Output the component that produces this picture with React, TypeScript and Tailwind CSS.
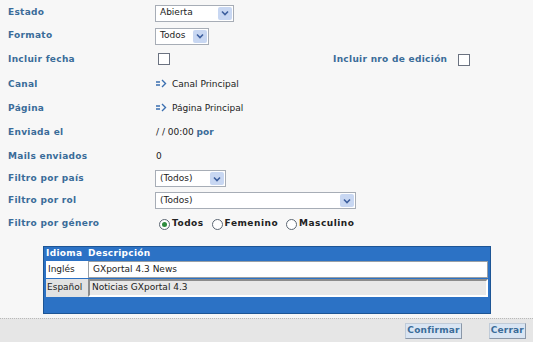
import React from "react"

const font = { fontFamily: '"DejaVu Sans", Verdana, sans-serif' }

function Select({ value, width }: { value: string; width: string }) {
  return (
    <div className={`flex h-[17px] items-center border border-[#a7adb6] bg-white pl-[4px] pr-[1px] ${width}`}>
      <span className="flex-1 text-[9px] text-[#222]">{value}</span>
      <span className="flex h-[13px] w-[14px] items-center justify-center rounded-[2px] bg-[#c8d7f2]">
        <svg width="8" height="6" viewBox="0 0 8 6">
          <path d="M1 1.5 L4 4.5 L7 1.5" stroke="#3d5f9e" strokeWidth="1.6" fill="none" />
        </svg>
      </span>
    </div>
  )
}

function Check() {
  return <span className="inline-block h-[12px] w-[12px] border border-[#6b7280] bg-white" />
}

function Arrow() {
  return (
    <svg width="12" height="9" viewBox="0 0 12 9" className="mr-[4px] -mt-[3px]">
      <path d="M0 3 H4 M0 6 H4" stroke="#3b6fb0" strokeWidth="1.3" />
      <path d="M6 1 L9.5 4.5 L6 8" stroke="#3b6fb0" strokeWidth="1.4" fill="none" />
    </svg>
  )
}

function Radio({ checked }: { checked?: boolean }) {
  return (
    <span className="mr-[2px] inline-flex h-[11px] w-[11px] items-center justify-center rounded-full border border-[#5c6773] bg-white">
      {checked && <span className="h-[5px] w-[5px] rounded-full bg-[#2e8b3e]" />}
    </span>
  )
}

const Label = ({ children }: { children: React.ReactNode }) => (
  <div className="w-[155px] shrink-0 pl-[8px] text-[9px] font-bold tracking-[0.3px] text-[#3a6c99]">{children}</div>
)

export default function App() {
  return (
    <div style={font} className="flex h-[342px] w-[533px] flex-col overflow-hidden bg-[#f7f7f7]">
      <div className="flex flex-col pt-[2px]">
        <div className="flex h-[22px] items-center">
          <Label>Estado</Label>
          <Select value="Abierta" width="w-[79px]" />
        </div>
        <div className="flex h-[24px] items-center">
          <Label>Formato</Label>
          <Select value="Todos" width="w-[54px]" />
        </div>
        <div className="flex h-[24px] items-center">
          <Label>Incluir fecha</Label>
          <div className="w-[178px] pl-[3px]">
            <Check />
          </div>
          <div className="w-[125px] text-[9px] font-bold tracking-[0.3px] text-[#3a6c99]">Incluir nro de edición</div>
          <Check />
        </div>
        <div className="flex h-[25px] items-center">
          <Label>Canal</Label>
          <div className="flex items-center pl-[1px] text-[9px] text-[#222]">
            <Arrow />
            Canal Principal
          </div>
        </div>
        <div className="flex h-[24px] items-center">
          <Label>Página</Label>
          <div className="flex items-center pl-[1px] text-[9px] text-[#222]">
            <Arrow />
            Página Principal
          </div>
        </div>
        <div className="flex h-[24px] items-center">
          <Label>Enviada el</Label>
          <div className="pl-[1px] text-[9px] text-[#222]">
            / / 00:00 <span className="font-bold text-[#3a6c99]">por</span>
          </div>
        </div>
        <div className="flex h-[23px] items-center">
          <Label>Mails enviados</Label>
          <div className="pl-[1px] text-[9px] text-[#222]">0</div>
        </div>
        <div className="flex h-[21px] items-center">
          <Label>Filtro por país</Label>
          <Select value="(Todos)" width="w-[71px]" />
        </div>
        <div className="flex h-[23px] items-center">
          <Label>Filtro por rol</Label>
          <Select value="(Todos)" width="w-[201px]" />
        </div>
        <div className="flex h-[24px] items-center">
          <Label>Filtro por género</Label>
          <div className="flex items-center pl-[4px] text-[9px] font-bold tracking-[0.5px] text-[#222]">
            <Radio checked />
            <span className="mr-[8px]">Todos</span>
            <Radio />
            <span className="mr-[8px]">Femenino</span>
            <Radio />
            <span>Masculino</span>
          </div>
        </div>
      </div>

      <div className="ml-[43px] mt-[10px] flex w-[448px] flex-col border border-[#1d5595] bg-[#2c72c5] px-[2px] pb-[16px]">
        <div className="flex h-[14px] items-center text-[9px] font-bold tracking-[0.3px] text-white">
          <span className="w-[42px]">Idioma</span>
          <span>Descripción</span>
        </div>
        <div className="flex h-[17px]">
          <div className="flex w-[42px] items-center bg-white pl-[2px] text-[9px] text-[#222]">Inglés</div>
          <div className="flex flex-1 items-center border border-[#9aa0a6] bg-white pl-[4px] text-[9px] text-[#222]">
            GXportal 4.3 News
          </div>
        </div>
        <div className="mt-[1px] flex h-[18px]">
          <div className="flex w-[42px] items-center bg-[#e2e2e2] pl-[1px] text-[9px] text-[#222]">Español</div>
          <div className="flex flex-1 items-center border-2 border-t-[#8c8c8c] border-l-[#8c8c8c] border-r-white border-b-white bg-[#e8e8e8] pl-[2px] text-[9px] text-[#222]">
            Noticias GXportal 4.3
          </div>
        </div>
      </div>

      <div className="mt-[4px] flex flex-1 items-center justify-end gap-[27px] border-t border-dotted border-[#b9b9b9] bg-[#e6e6e6] pr-[7px] pt-[1px]">
        <button className="h-[16px] border border-[#c0cbd8] border-b-[#8a97a8] border-r-[#8a97a8] bg-[#d9e5f3] px-[1px] text-[9px] font-bold tracking-[0.2px] text-[#3a6c99]">
          Confirmar
        </button>
        <button className="h-[16px] border border-[#c0cbd8] border-b-[#8a97a8] border-r-[#8a97a8] bg-[#d9e5f3] px-[1px] text-[9px] font-bold tracking-[0.2px] text-[#3a6c99]">
          Cerrar
        </button>
      </div>
    </div>
  )
}
